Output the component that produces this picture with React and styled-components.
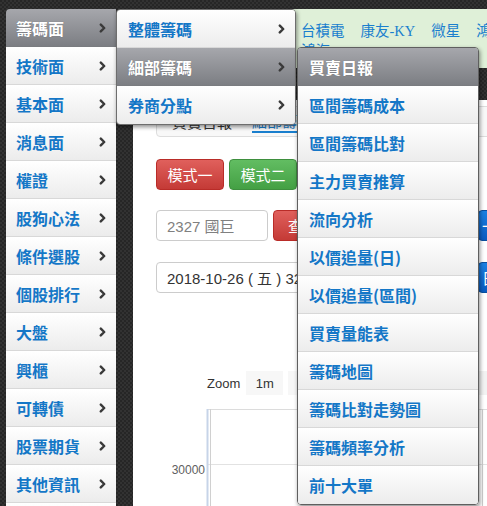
import styled, { createGlobalStyle } from "styled-components";

const GlobalStyle = createGlobalStyle`
  html, body {
    margin: 0;
    padding: 0;
    overflow: hidden;
  }
  body {
    width: 487px;
    height: 506px;
    background-color: #2a2a2a;
    background-image: repeating-conic-gradient(#323232 0 25%, #262626 0 50%);
    background-size: 4px 4px;
    font-family: "Liberation Sans", "Noto Sans CJK TC", sans-serif;
  }
`;

const leftItems = [
  "籌碼面",
  "技術面",
  "基本面",
  "消息面",
  "權證",
  "股狗心法",
  "條件選股",
  "個股排行",
  "大盤",
  "興櫃",
  "可轉債",
  "股票期貨",
  "其他資訊",
  "會員專區",
];

const subItems = ["整體籌碼", "細部籌碼", "券商分點"];

const detailItems = [
  "買賣日報",
  "區間籌碼成本",
  "區間籌碼比對",
  "主力買賣推算",
  "流向分析",
  "以價追量(日)",
  "以價追量(區間)",
  "買賣量能表",
  "籌碼地圖",
  "籌碼比對走勢圖",
  "籌碼頻率分析",
  "前十大單",
];

const Arrow = () => (
  <svg width="7" height="10" viewBox="0 0 7 10">
    <path
      d="M1.8 1.6 L5.2 5 L1.8 8.4"
      fill="none"
      stroke="#3a3a3a"
      strokeWidth="2.4"
      strokeLinecap="round"
      strokeLinejoin="round"
    />
  </svg>
);

const App = () => {
  return (
    <>
      <GlobalStyle />
      <Page>
        <MenuWrap>
          <MenuList>
            {leftItems.map((t, i) => (
              <MenuItem key={t} $active={i === 0}>
                <span>{t}</span>
                <Arrow />
              </MenuItem>
            ))}
          </MenuList>
          <SubMenu>
            {subItems.map((t, i) => (
              <MenuItem key={t} $active={i === 1} $pad={11}>
                <span>{t}</span>
                <Arrow />
              </MenuItem>
            ))}
          </SubMenu>
          <DetailMenu>
            {detailItems.map((t, i) => (
              <MenuItem key={t} $active={i === 0} $pad={11}>
                <span>{t}</span>
              </MenuItem>
            ))}
          </DetailMenu>
        </MenuWrap>

        <Main>
          <GreenBar>
            <StockLine>
              <StockLink>台積電</StockLink>
              <StockLink>康友-KY</StockLink>
              <StockLink>微星</StockLink>
              <StockLink>鴻準</StockLink>
            </StockLine>
            <StockLine>
              <StockLink>鴻海</StockLink>
            </StockLine>
          </GreenBar>

          <Panel>
            <Form>
              <TabBox>
                <TabText>買賣日報</TabText>
                <TabLink>細部籌碼</TabLink>
              </TabBox>
              <Row $top={22}>
                <Btn $color="red">模式一</Btn>
                <Btn $color="green">模式二</Btn>
              </Row>
              <Row $top={20}>
                <Field $width={112}>
                  <Placeholder>2327 國巨</Placeholder>
                </Field>
                <Btn $color="red" $width={60}>查詢</Btn>
                <Btn $color="blue" $gapLeft={140}>一鍵</Btn>
              </Row>
              <Row $top={21}>
                <Field $width={260}>2018-10-26 ( 五 ) 32筆</Field>
                <Btn $color="blue" $gapLeft={57}>日期</Btn>
              </Row>
            </Form>

            <ZoomRow>
              <ZoomLabel>Zoom</ZoomLabel>
              <ZoomBtn>1m</ZoomBtn>
              <ZoomBtn>3m</ZoomBtn>
              <RangeBox />
            </ZoomRow>

            <Chart width="354" height="100" viewBox="0 0 354 100">
              <line x1="74" y1="0.5" x2="354" y2="0.5" stroke="#dcdcdc" />
              <line x1="74" y1="55.5" x2="354" y2="55.5" stroke="#e2e2e2" />
              <line x1="74.5" y1="0" x2="74.5" y2="100" stroke="#c7d4e8" strokeWidth="2" />
              <line x1="77.5" y1="0" x2="77.5" y2="100" stroke="#d0d0d0" />
              <line x1="349.5" y1="0" x2="349.5" y2="100" stroke="#cfcfcf" />
              <text
                x="72"
                y="65"
                textAnchor="end"
                fontSize="12"
                fill="#606060"
                fontFamily="Liberation Sans, sans-serif"
              >
                30000
              </text>
            </Chart>
          </Panel>
        </Main>
      </Page>
    </>
  );
};

export default App;

const Page = styled.div`
  display: flex;
  align-items: flex-start;
  gap: 17px;
  padding: 9px 0 0 6px;
  width: 700px;
`;

const MenuWrap = styled.div`
  position: relative;
  flex: none;
  width: 110px;
  z-index: 5;
`;

const MenuList = styled.ul`
  margin: 0;
  padding: 0;
  list-style: none;
  width: 110px;
  border-radius: 4px 0 0 0;
  overflow: hidden;
`;

const MenuItem = styled.li`
  display: flex;
  align-items: center;
  justify-content: space-between;
  box-sizing: border-box;
  height: 38px;
  padding: 0 10px 0 ${(p) => p.$pad || 10}px;
  border-bottom: 1px solid ${(p) => (p.$active ? "#7a7c80" : "#d8d8d8")};
  background: ${(p) =>
    p.$active
      ? "linear-gradient(#a6a7ac, #7c7e83)"
      : "linear-gradient(#ffffff, #ececec)"};
  color: ${(p) => (p.$active ? "#ffffff" : "#1477c7")};
  font-family: "Noto Sans CJK TC", "Liberation Sans", sans-serif;
  font-size: 16px;
  font-weight: 700;
  white-space: nowrap;
  list-style: none;

  span {
    line-height: 1;
    text-shadow: ${(p) => (p.$active ? "0 0 1px rgba(0,0,0,0.3)" : "none")};
  }
  svg {
    flex: none;
  }
`;

const SubMenu = styled.ul`
  position: absolute;
  left: 110px;
  top: 0;
  width: 180px;
  margin: 0;
  padding: 0;
  box-sizing: border-box;
  border: 1px solid #6e6e6e;
  border-radius: 4px;
  overflow: hidden;
  box-shadow: 1px 2px 4px rgba(0, 0, 0, 0.45);

  li:last-child {
    border-bottom: none;
  }
`;

const DetailMenu = styled(SubMenu)`
  left: 291px;
  top: 38px;
  width: 182px;
  border-color: #5f5f5f;
`;

const Main = styled.div`
  flex: none;
  width: 540px;
`;

const GreenBar = styled.div`
  box-sizing: border-box;
  height: 59px;
  padding: 10px 0 0 168px;
  background: #dff0d8;
  overflow: hidden;
`;

const StockLine = styled.div`
  display: flex;
  gap: 16px;
  height: 20px;
  align-items: center;
  white-space: nowrap;
`;

const StockLink = styled.span`
  color: #1a7fce;
  font-family: "Liberation Serif", "Noto Sans CJK TC", serif;
  font-size: 14.5px;
`;

const Panel = styled.div`
  margin-top: 32px;
  background: #ffffff;
  height: 420px;
`;

const Form = styled.div`
  padding: 6px 0 0 23px;
`;

const TabBox = styled.div`
  display: flex;
  align-items: center;
  gap: 20px;
  box-sizing: border-box;
  height: 31px;
  padding: 0 15px;
  border: 1px solid #dddddd;
  border-radius: 4px;
  background: #f8f8f8;
  font-size: 15px;
`;

const TabText = styled.span`
  color: #333333;
`;

const TabLink = styled.span`
  color: #1a7fce;
  border-bottom: 2px solid #1a7fce;
`;

const Row = styled.div`
  display: flex;
  gap: 5px;
  margin-top: ${(p) => p.$top}px;
  height: 31px;
`;

const btnColors = {
  red: ["#e0605c", "#c43a36", "#b92c28"],
  green: ["#62bd62", "#44a044", "#3e8f3e"],
  blue: ["#1c80e2", "#0a5bc0", "#0a4f9f"],
};

const Btn = styled.div`
  display: flex;
  align-items: center;
  justify-content: ${(p) => (p.$color === "blue" ? "flex-start" : "center")};
  box-sizing: border-box;
  width: ${(p) => p.$width || 68}px;
  height: 31px;
  margin-left: ${(p) => p.$gapLeft || 0}px;
  padding: ${(p) => (p.$color === "blue" ? "0 3px" : "0")};
  border: 1px solid ${(p) => btnColors[p.$color][2]};
  border-radius: 4px;
  background: linear-gradient(
    ${(p) => btnColors[p.$color][0]},
    ${(p) => btnColors[p.$color][1]}
  );
  color: #ffffff;
  font-size: 15px;
  flex: none;
`;

const Field = styled.div`
  display: flex;
  align-items: center;
  box-sizing: border-box;
  width: ${(p) => p.$width}px;
  height: 31px;
  padding: 0 10px;
  border: 1px solid #cccccc;
  border-radius: 4px;
  background: #ffffff;
  color: #333333;
  font-size: 15px;
  white-space: nowrap;
  overflow: hidden;
  flex: none;
`;

const Placeholder = styled.span`
  color: #808080;
`;

const ZoomRow = styled.div`
  display: flex;
  align-items: center;
  gap: 5px;
  margin-top: 78px;
  padding-left: 74px;
  height: 24px;
`;

const ZoomLabel = styled.span`
  color: #333333;
  font-size: 13px;
  margin-right: 1px;
`;

const ZoomBtn = styled.div`
  display: flex;
  align-items: center;
  justify-content: center;
  width: 37px;
  height: 24px;
  background: #f7f7f7;
  color: #333333;
  font-size: 13px;
`;

const RangeBox = styled.div`
  width: 60px;
  height: 24px;
  margin-left: 124px;
  background: #f2f2f2;
`;

const Chart = styled.svg`
  display: block;
  margin-top: 14px;
`;
